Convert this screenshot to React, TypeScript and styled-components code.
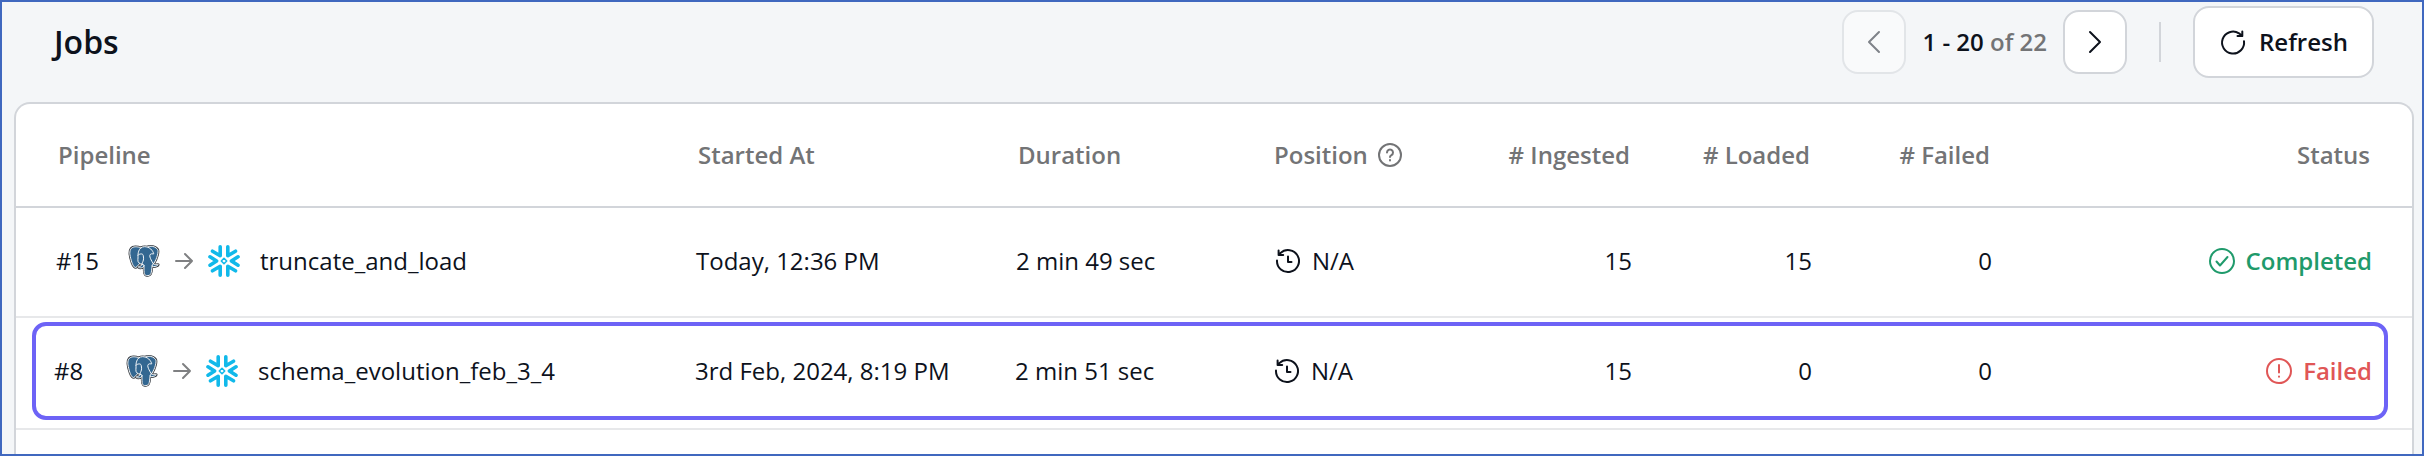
import React from "react";
import styled, { createGlobalStyle, css } from "styled-components";

const GlobalStyle = createGlobalStyle`
  *, *::before, *::after { box-sizing: border-box; }
  html, body, #root { height: 100%; }
  body {
    margin: 0;
    background: #f4f6f8;
    color: #0d121c;
    font-family: "Open Sans", "Noto Sans", sans-serif;
    font-size: 24px;
    line-height: 32px;
  }
`;

const Page = styled.main`
  height: 100%;
  min-width: 1600px;
  display: flex;
  flex-direction: column;
  overflow: hidden;
  border: 2px solid #4068bf;
  background: #f4f6f8;
`;

const Toolbar = styled.header`
  flex: none;
  display: flex;
  align-items: center;
  justify-content: space-between;
  padding: 4px 48px 24px 52px;
`;

const Title = styled.h1`
  margin: 0;
  font-size: 32px;
  line-height: 40px;
  font-weight: 600;
`;

const Actions = styled.div`
  display: flex;
  align-items: center;
  gap: 32px;
`;

const Pager = styled.nav`
  display: flex;
  align-items: center;
  gap: 16px;
`;

const buttonBase = css`
  display: flex;
  align-items: center;
  justify-content: center;
  padding: 0;
  border: 2px solid #d2d5da;
  border-radius: 16px;
  background: #fff;
  color: inherit;
  font: inherit;
`;

const PageButton = styled.button`
  ${buttonBase}
  width: 64px;
  height: 64px;
  &:disabled { opacity: 0.5; }
`;

const RefreshButton = styled.button`
  ${buttonBase}
  gap: 12px;
  height: 72px;
  padding: 0 24px;
  font-weight: 600;
`;

const Range = styled.span`
  font-weight: 600;
`;

const Muted = styled.span`
  color: #737476;
`;

const Divider = styled.span`
  width: 2px;
  height: 40px;
  background: #d2d5da;
`;

const Card = styled.section`
  flex: 1;
  min-height: 0;
  margin: 0 8px 0 12px;
  border: 2px solid #d2d5da;
  border-bottom: 0;
  border-radius: 16px 16px 0 0;
  background: #fff;
  overflow: hidden;
`;

const Table = styled.table`
  width: 100%;
  table-layout: fixed;
  border-collapse: separate;
  border-spacing: 0;
`;

const Col = styled.col<{ $w?: number }>`
  ${(p) => p.$w && `width: ${p.$w}px;`}
`;

const cell = css<{ $end?: boolean }>`
  text-align: ${(p) => (p.$end ? "right" : "left")};
  vertical-align: middle;
  white-space: nowrap;
`;

const HeadCell = styled.th<{ $end?: boolean }>`
  ${cell}
  height: 104px;
  padding: 0 18px;
  border-bottom: 2px solid #d2d5da;
  color: #737476;
  font-weight: 600;
  &:first-child { padding-left: 42px; }
  &:last-child { padding-right: 42px; }
`;

const Cell = styled.td<{ $end?: boolean }>`
  ${cell}
  height: 110px;
  padding: 0 16px 2px;
  border-bottom: 2px solid #e7e8ea;
  &:first-child { padding-left: 40px; }
  &:last-child { padding-right: 40px; }
`;

const Row = styled.tr<{ $selected?: boolean }>`
  position: relative;
  ${(p) =>
    p.$selected &&
    css`
      ${Cell} {
        height: 112px;
        padding-bottom: 4px;
        padding-left: 15px;
      }
      ${Cell}:first-child { padding-left: 38px; }
      ${Cell}:first-child::after {
        content: "";
        position: absolute;
        inset: 4px 24px 10px 16px;
        border: 4px solid #6d63f6;
        border-radius: 14px;
        pointer-events: none;
      }
    `}
`;

const Inline = styled.div<{ $gap: number }>`
  display: flex;
  align-items: center;
  gap: ${(p) => p.$gap}px;
`;

const JobNumber = styled.span`
  width: 60px;
`;

const PipelineName = styled.span`
  padding-left: 8px;
`;

const Status = styled(Inline)<{ $tone: "ok" | "bad" }>`
  justify-content: flex-end;
  color: ${(p) => (p.$tone === "ok" ? "#1f9a6b" : "#e05656")};
  font-weight: 600;
`;

const Stroke = styled.svg<{ $size?: number }>`
  flex: none;
  width: ${(p) => p.$size ?? 28}px;
  height: ${(p) => p.$size ?? 28}px;
  fill: none;
  stroke: currentColor;
  stroke-width: 2;
  stroke-linecap: round;
  stroke-linejoin: round;
`;

const ArrowRight = styled(Stroke)`
  color: #7f8082;
`;

const Logo = styled.svg`
  flex: none;
  width: 32px;
  height: 32px;
  stroke-linecap: round;
  stroke-linejoin: round;
`;

const BODY =
  "M323.205 324.227c2.833-23.601 1.984-27.062 19.563-23.239l4.463.392c13.517.615 31.199-2.174 41.587-7 22.362-10.376 35.622-27.7 13.572-23.148-50.297 10.376-53.755-6.655-53.755-6.655 53.111-78.803 75.313-178.836 56.149-203.322C352.514-5.534 262.036 26.049 260.522 26.869l-.482.089c-9.938-2.062-21.06-3.294-33.554-3.496-22.761-.374-40.032 5.967-53.133 15.904 0 0-161.408-66.498-153.899 83.628 1.597 31.936 45.777 241.655 98.47 178.31 19.259-23.163 37.871-42.748 37.871-42.748 9.242 6.14 20.307 9.272 31.912 8.147l.897-.765c-.281 2.876-.157 5.689.359 9.019-13.572 15.167-9.584 17.83-36.723 23.416-27.457 5.659-11.326 15.734-.797 18.367 12.768 3.193 42.305 7.716 62.268-20.224l-.795 3.188c5.325 4.26 4.965 30.619 5.72 49.452.756 18.834 2.017 36.409 5.856 46.771 3.839 10.36 8.369 37.05 44.036 29.406 29.809-6.388 52.6-15.582 54.677-101.107";

const CONTOURS = [
  "M215.866 286.484c-1.385 49.516.348 99.377 5.193 111.495 4.848 12.118 15.223 35.688 50.9 28.045 29.806-6.39 40.651-18.756 45.357-46.051 3.466-20.082 10.148-75.854 11.005-87.281",
  "M173.104 38.256S11.583-27.76 19.092 122.365c1.597 31.938 45.779 241.664 98.473 178.316 19.256-23.166 36.671-41.335 36.671-41.335",
  "M260.349 26.207c-5.591 1.753 89.848-34.889 144.087 34.417 19.159 24.484-3.043 124.519-56.153 203.329",
  "M348.282 263.953s3.461 17.036 53.764 6.653c22.04-4.552 8.776 12.774-13.577 23.155-18.345 8.514-59.474 10.696-60.146-1.069-1.729-30.355 21.647-21.133 19.96-28.739-1.525-6.85-11.979-13.573-18.894-30.338-6.037-14.633-82.796-126.849 21.287-110.183 3.813-.789-27.146-99.002-124.553-100.599-97.385-1.597-94.19 119.762-94.19 119.762",
  "M188.604 274.334c-13.577 15.166-9.584 17.829-36.723 23.417-27.459 5.66-11.326 15.733-.797 18.365 12.768 3.195 42.307 7.718 62.266-20.229 6.078-8.509-.036-22.086-8.385-25.547-4.034-1.671-9.428-3.765-16.361 3.994z",
  "M187.715 274.069c-1.368-8.917 2.93-19.528 7.536-31.942 6.922-18.626 22.893-37.255 10.117-96.339-9.523-44.029-73.396-9.163-73.436-3.193-.039 5.968 2.889 30.26-1.067 58.548-5.162 36.913 23.488 68.132 56.479 64.938",
];

const PostgresLogo = () => (
  <Logo viewBox="0 0 432 445" aria-label="PostgreSQL">
    <path d={BODY} fill="#3a3f45" stroke="#3a3f45" strokeWidth="36" />
    <path d={BODY} fill="#336791" />
    <g fill="none" stroke="#fff" strokeWidth="13">
      {CONTOURS.map((d) => (
        <path key={d} d={d} />
      ))}
    </g>
  </Logo>
);

const SnowflakeLogo = () => (
  <Logo viewBox="0 0 32 32" aria-label="Snowflake" fill="none" stroke="#11b9ea" strokeWidth="3.6">
    <path d="M12.200 1.800v8.900L4.500 6.200M19.800 1.800v8.900l7.700-4.500M12.200 30.200v-8.900l-7.700 4.500M19.800 30.200v-8.900l7.700 4.500M2 11.800L8.600 16 2 20.200M30 11.800L23.400 16l6.600 4.200" />
    <path d="M16 13.300l2.700 2.700-2.700 2.700-2.700-2.700z" strokeWidth="1.600" />
  </Logo>
);

type Job = {
  id: number;
  name: string;
  started: string;
  duration: string;
  ingested: number;
  loaded: number;
  failed: number;
  ok: boolean;
  selected?: boolean;
};

const jobs: Job[] = [
  { id: 15, name: "truncate_and_load", started: "Today, 12:36 PM", duration: "2 min 49 sec", ingested: 15, loaded: 15, failed: 0, ok: true },
  { id: 8, name: "schema_evolution_feb_3_4", started: "3rd Feb, 2024, 8:19 PM", duration: "2 min 51 sec", ingested: 15, loaded: 0, failed: 0, ok: false, selected: true },
];

const JobRow = ({ job }: { job: Job }) => (
  <Row $selected={job.selected}>
    <Cell>
      <Inline $gap={12}>
        <JobNumber>#{job.id}</JobNumber>
        <PostgresLogo />
        <ArrowRight $size={24} viewBox="0 0 24 24">
          <path d="M4 12h16M13 5l7 7-7 7" />
        </ArrowRight>
        <SnowflakeLogo />
        <PipelineName>{job.name}</PipelineName>
      </Inline>
    </Cell>
    <Cell>{job.started}</Cell>
    <Cell>{job.duration}</Cell>
    <Cell>
      <Inline $gap={12}>
        <Stroke viewBox="-2 0 28 28">
          <path d="M3 13.500a11 11 0 1 0 3.400-7.400L4.600 8M4.600 3.600V8h4.600M14 9.500v5.500h3.500" />
        </Stroke>
        N/A
      </Inline>
    </Cell>
    <Cell $end>{job.ingested}</Cell>
    <Cell $end>{job.loaded}</Cell>
    <Cell $end>{job.failed}</Cell>
    <Cell $end>
      <Status $gap={10} $tone={job.ok ? "ok" : "bad"}>
        <Stroke viewBox="0 0 28 28">
          <circle cx="14" cy="14" r="12" />
          {job.ok ? <path d="M8.500 14.500l3.500 4 7.500-8.500" /> : <path d="M14 8v7.500M14 19.500v.3" />}
        </Stroke>
        {job.ok ? "Completed" : "Failed"}
      </Status>
    </Cell>
  </Row>
);

export default function App() {
  return (
    <>
      <GlobalStyle />
      <Page>
        <Toolbar>
          <Title>Jobs</Title>
          <Actions>
            <Pager aria-label="Pagination">
              <PageButton disabled aria-label="Previous page">
                <Stroke viewBox="0 0 28 28">
                  <path d="M19 4L9 14l10 10" />
                </Stroke>
              </PageButton>
              <Range>
                1 - 20 <Muted>of 22</Muted>
              </Range>
              <PageButton aria-label="Next page">
                <Stroke viewBox="0 0 28 28">
                  <path d="M9 4l10 10L9 24" />
                </Stroke>
              </PageButton>
            </Pager>
            <Divider />
            <RefreshButton>
              <Stroke viewBox="0 0 28 28">
                <path d="M25 13.200A11 11 0 1 1 20 5.300L23.300 8M23.300 3.500V8h-4.800" />
              </Stroke>
              Refresh
            </RefreshButton>
          </Actions>
        </Toolbar>
        <Card>
          <Table>
            <colgroup>
              <Col />
              <Col $w={320} />
              <Col $w={256} />
              <Col $w={212} />
              <Col $w={180} />
              <Col $w={180} />
              <Col $w={180} />
              <Col $w={404} />
            </colgroup>
            <thead>
              <tr>
                <HeadCell>Pipeline</HeadCell>
                <HeadCell>Started At</HeadCell>
                <HeadCell>Duration</HeadCell>
                <HeadCell>
                  <Inline $gap={8}>
                    Position
                    <Stroke viewBox="0 0 28 28">
                      <circle cx="14" cy="14" r="11" />
                      <path d="M11 11.500a3 3 0 1 1 4.500 2.600c-1 .6-1.500 1-1.500 2M14 19v.4" />
                    </Stroke>
                  </Inline>
                </HeadCell>
                <HeadCell $end># Ingested</HeadCell>
                <HeadCell $end># Loaded</HeadCell>
                <HeadCell $end># Failed</HeadCell>
                <HeadCell $end>Status</HeadCell>
              </tr>
            </thead>
            <tbody>
              {jobs.map((job) => (
                <JobRow key={job.id} job={job} />
              ))}
            </tbody>
          </Table>
        </Card>
      </Page>
    </>
  );
}
